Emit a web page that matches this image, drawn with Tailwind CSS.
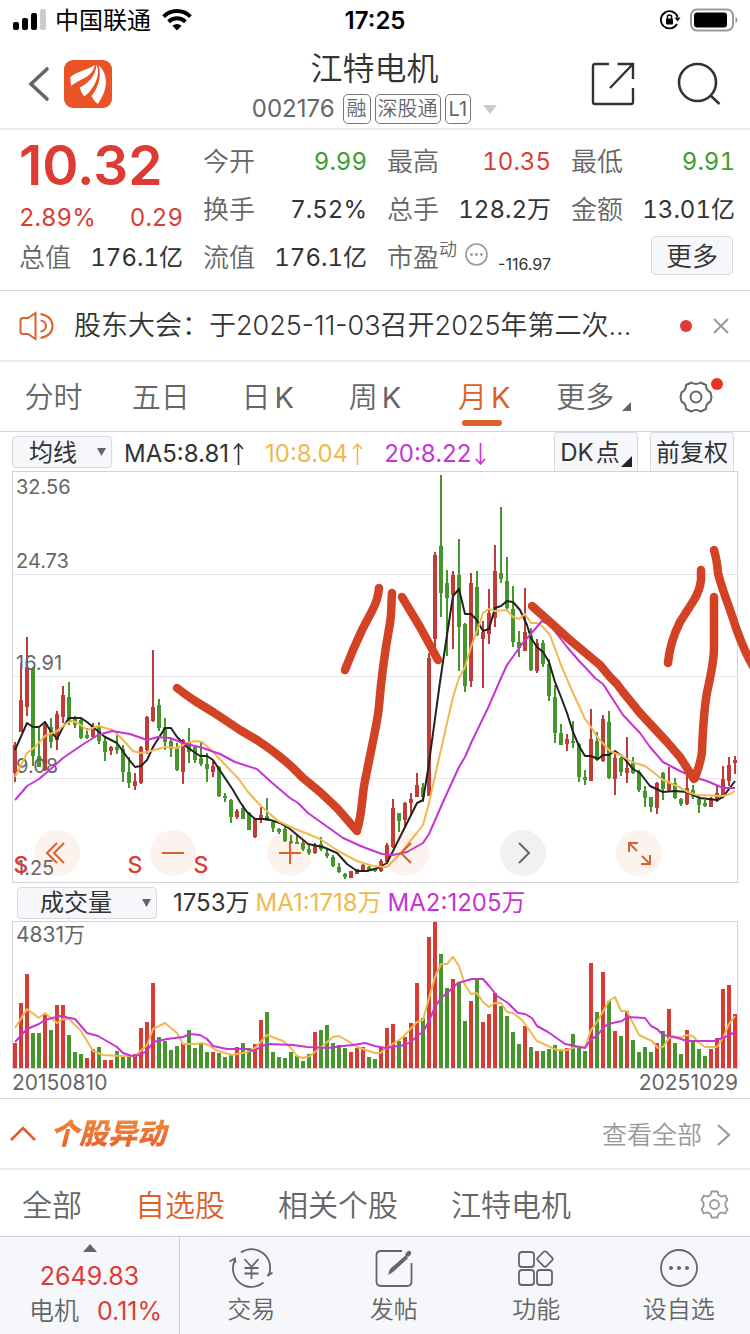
<!DOCTYPE html>
<html lang="zh-CN">
<head>
<meta charset="utf-8">
<meta name="viewport" content="width=device-width, initial-scale=1">
<title>江特电机 002176</title>
<script src="https://cdn.jsdelivr.net/npm/@tailwindcss/browser@4"></script>
</head>
<body class="flex min-h-screen flex-col bg-white font-['Inter','Noto_Sans_CJK_SC',sans-serif] text-[25px] leading-8 text-[#333]">

<!-- status bar -->
<div class="grid h-10 grid-cols-[1fr_auto_1fr] items-center pl-3 pr-3 text-black">
  <div class="flex items-center gap-[9px]">
    <svg class="h-[22px] w-[34px]" viewBox="0 0 34 22"><rect x="1" y="13" width="6" height="8" rx="2"/><rect x="10" y="9" width="6" height="12" rx="2"/><rect x="19" y="4" width="6" height="17" rx="2"/><rect x="28" y="0" width="6" height="21" rx="2" fill="#ccc"/></svg>
    <span class="pt-[2px] text-2xl">中国联通</span>
    <svg class="ml-[2px] h-[22px] w-[30px]" viewBox="0 0 30 22" fill="none" stroke="#000" stroke-width="4"><path d="M1.6 7.6a19 19 0 0 1 26.8 0"/><path d="M6.6 12.8a12 12 0 0 1 16.8 0"/><path d="M15 21.5l-4.6-4.7a6.5 6.5 0 0 1 9.2 0z" fill="#000" stroke="none"/></svg>
  </div>
  <span class="pt-[2px] text-2xl font-semibold">17:25</span>
  <div class="flex items-center justify-end gap-[9px]">
    <svg class="h-[22px] w-[22px]" viewBox="0 0 22 22" fill="none" stroke="#000" stroke-width="1.8"><path d="M18.6 8A8.6 8.6 0 1 0 18 15"/><path d="M15.5 8.5h6l-3 4z" fill="#000" stroke="none"/><rect x="7" y="9.5" width="7" height="6" rx="1" fill="#000" stroke="none"/><path d="M8.4 10V8.2a2.1 2.1 0 0 1 4.2 0V10" stroke-width="1.5"/></svg>
    <svg class="h-[24px] w-[48px]" viewBox="0 0 48 24"><rect x="1" y="1.5" width="42" height="21" rx="6" fill="none" stroke="#999" stroke-width="2"/><rect x="4" y="4.500" width="33" height="15" rx="3"/><path d="M45.500 8.500q2 1.500 2 3.500t-2 3.500z" fill="#999"/></svg>
  </div>
</div>

<!-- header -->
<header class="grid h-[90px] grid-cols-[1fr_auto_1fr] items-center border-b-2 border-[#ebebeb] pl-[28px] pr-[29px]">
  <div class="flex items-center gap-[14px]">
    <button aria-label="返回"><svg class="h-[36px] w-[22px]" viewBox="0 0 22 36" fill="none" stroke="#666" stroke-width="3.600" stroke-linecap="round"><path d="M19 3L3 18l16 15"/></svg></button>
    <a href="#" aria-label="东方财富"><svg class="size-12" viewBox="0 0 48 48"><rect width="48" height="48" rx="9" fill="#ea5326"/><path fill="#fff" d="M6.300 17C13 11.500 22 10.500 31 5c-2 7-6 11-11.500 13.500C15.500 20.500 11 22.500 7 26z"/><path fill="#fff" d="M15.700 27.500C23 24 31.500 17 32.500 5c5 9-3 25.500-12.500 31.500q-3-4-4.300-9z"/><path fill="#fff" d="M27.500 36C33 29 38.500 18 34.500 5c11 10 9 26-.8 39q-3.700-3-6.200-8z"/></svg></a>
  </div>
  <div class="flex flex-col items-center pt-[6px]">
    <h1 class="text-[32px] leading-10 font-[350]">江特电机</h1>
    <div class="mt-1 flex items-center gap-1 text-[#666]">
      <span class="mr-1 text-2xl leading-8">002176</span>
      <span class="rounded-[5px] border border-[#777] px-[3px] text-xl leading-7 font-[350]">融</span>
      <span class="rounded-[5px] border border-[#777] px-[2px] text-xl leading-7 font-[350]">深股通</span>
      <span class="rounded-[5px] border border-[#777] px-[3px] text-xl leading-7">L1</span>
      <svg class="ml-2 h-[9px] w-[14px]" viewBox="0 0 14 9"><path d="M0 0h14L7 9z" fill="#ccc"/></svg>
    </div>
  </div>
  <div class="flex items-center justify-end gap-[42px]">
    <button aria-label="分享"><svg class="size-[44px]" viewBox="0 0 44 44" fill="none" stroke="#333" stroke-width="2.400"><path d="M18 2H4q-2 0-2 2v36q0 2 2 2h36q2 0 2-2V26M26.500 2H42v15M41 3L19 26"/></svg></button>
    <button aria-label="搜索"><svg class="size-[44px]" viewBox="0 0 44 44" fill="none" stroke="#333" stroke-width="2.600"><circle cx="20.500" cy="20.500" r="18.500"/><path d="M33.500 33.500l9 8.500"/></svg></button>
  </div>
</header>

<!-- quote -->
<section class="grid h-[161px] grid-cols-4 gap-x-5 border-b border-[#d5d5da] pl-[19px] pr-[15px] pt-2 text-2xl tabular-nums">
  <div class="text-[#dd3b34]">
    <div class="h-[55px] text-[55px] leading-[54px] font-semibold proportional-nums">10.32</div>
    <div class="flex h-[41px] items-end justify-between"><span>2.89%</span><span>0.29</span></div>
    <div class="flex h-12 items-center justify-between text-[#333]"><span class="text-[26px] font-[350] text-[#666]">总值</span><span>176.1亿</span></div>
  </div>
  <div>
    <div class="flex h-12 items-center justify-between"><span class="text-[26px] font-[350] text-[#666]">今开</span><span class="text-[#429e2c]">9.99</span></div>
    <div class="flex h-12 items-center justify-between"><span class="text-[26px] font-[350] text-[#666]">换手</span><span>7.52%</span></div>
    <div class="flex h-12 items-center justify-between"><span class="text-[26px] font-[350] text-[#666]">流值</span><span>176.1亿</span></div>
  </div>
  <div>
    <div class="flex h-12 items-center justify-between"><span class="text-[26px] font-[350] text-[#666]">最高</span><span class="text-[#dd3b34]">10.35</span></div>
    <div class="flex h-12 items-center justify-between"><span class="text-[26px] font-[350] text-[#666]">总手</span><span>128.2万</span></div>
    <div class="flex h-12 items-center whitespace-nowrap text-[#666]"><span class="text-[26px] font-[350]">市盈</span><span class="mb-4 text-lg leading-6 font-[350]">动</span>
      <svg class="mb-2 ml-2 size-[23px] shrink-0" viewBox="0 0 23 23" fill="#999"><circle cx="11.500" cy="11.500" r="10.500" fill="none" stroke="#999" stroke-width="1.600"/><circle cx="6.500" cy="11.500" r="1.400"/><circle cx="11.500" cy="11.500" r="1.400"/><circle cx="16.500" cy="11.500" r="1.400"/></svg>
      <span class="ml-auto mt-3 text-base text-[#333] proportional-nums">-116.97</span></div>
  </div>
  <div>
    <div class="flex h-12 items-center justify-between"><span class="text-[26px] font-[350] text-[#666]">最低</span><span class="text-[#429e2c]">9.91</span></div>
    <div class="flex h-12 items-center justify-between"><span class="text-[26px] font-[350] text-[#666]">金额</span><span>13.01亿</span></div>
    <div class="flex h-12 items-start justify-end pr-[2px] pt-[2px]"><button class="h-[39px] w-[82px] rounded-[5px] border border-[#d8dae2] bg-[#f6f7fa] pt-[2px] text-[26px] leading-8 font-[350]">更多</button></div>
  </div>
</section>

<!-- notice -->
<section class="flex h-[71px] items-center border-b-2 border-[#ebebeb] pl-[19px] pr-[21px]">
  <svg class="h-[30px] w-[35px] shrink-0" viewBox="0 0 35 30" fill="none" stroke="#dc602a" stroke-width="2"><path d="M16.500 2v26L9 23H4q-2.500 0-2.500-2.500v-11Q1.500 7 4 7h5z"/><path d="M21.500 9.500a5.500 5.500 0 0 1 0 11M21.500 3q12 2.500 12 12t-12 12"/></svg>
  <a href="#" class="ml-5 min-w-0 flex-1 truncate text-[27px] font-[350]">股东大会：于2025-11-03召开2025年第二次...</a>
  <span class="ml-4 size-3 rounded-full bg-[#dd3b34]"></span>
  <button aria-label="关闭" class="ml-[21px]"><svg class="size-4" viewBox="0 0 16 16" stroke="#999" stroke-width="2"><path d="M1 1l14 14M15 1L1 15"/></svg></button>
</section>

<!-- period tabs -->
<nav class="grid h-[70px] grid-cols-7 border-b border-[#d5d5da] text-[29px] font-[350] text-[#666]">
  <button class="pt-[2px]">分时</button>
  <button class="pt-[2px]">五日</button>
  <button class="pt-[2px]">日<span class="ml-1 font-normal">K</span></button>
  <button class="pt-[2px]">周<span class="ml-1 font-normal">K</span></button>
  <button class="relative pl-1 pt-[2px] text-[#dc602a]">月<span class="ml-1 font-normal">K</span><span class="absolute bottom-[5px] left-1/2 h-[6px] w-10 -translate-x-1/2 rounded-full bg-[#dc602a]"></span></button>
  <button class="relative pr-2 pt-[2px]">更多<svg class="absolute bottom-5 right-3 size-[9px]" viewBox="0 0 9 9"><path d="M9 0v9H0z" fill="#666"/></svg></button>
  <button aria-label="设置" class="relative flex items-center justify-center"><svg class="size-[34px]" viewBox="0 0 34 34" fill="none" stroke="#666" stroke-width="2"><path d="M12.500 2.500q4.500 3 9 0l5.500 2.500q-.300 5 4.500 7.500l1 4.500-1 4.500q-4.800 2.500-4.500 7.500l-5.500 2.500q-4.500-3-9 0L7 29q.300-5-4.500-7.500l-1-4.500 1-4.500Q7.300 10 7 5z" stroke-linejoin="round"/><circle cx="17" cy="17" r="5.500"/></svg><span class="absolute right-[27px] top-4 size-3 rounded-full bg-[#e93323]"></span></button>
</nav>

<!-- moving averages -->
<div class="flex h-[39px] items-center pl-3 pr-4">
  <div class="relative w-[100px]">
    <select aria-label="主图指标" class="block h-8 w-full appearance-none rounded-[4px] border border-[#d8dae2] bg-[#f6f7fa] pl-4 pt-[2px] text-2xl leading-7"><option>均线</option></select>
    <svg class="pointer-events-none absolute right-[6px] top-3 h-2 w-[9px]" viewBox="0 0 9 8"><path d="M0 0h9L4.500 8z" fill="#666"/></svg>
  </div>
  <span class="ml-3 mt-1 flex items-center gap-1 text-2xl">MA5:8.81<svg class="h-[22px] w-[11px]" viewBox="0 0 11 22" fill="none" stroke="currentColor" stroke-width="1.600"><path d="M5.500 22V1M1 6l4.500-5L10 6"/></svg></span>
  <span class="ml-[21px] mt-1 flex items-center gap-1 text-2xl text-[#f0b950]">10:8.04<svg class="h-[22px] w-[11px]" viewBox="0 0 11 22" fill="none" stroke="currentColor" stroke-width="1.600"><path d="M5.500 22V1M1 6l4.500-5L10 6"/></svg></span>
  <span class="ml-[21px] mt-1 flex items-center gap-1 text-2xl text-[#c734d3]">20:8.22<svg class="h-[22px] w-[11px]" viewBox="0 0 11 22" fill="none" stroke="currentColor" stroke-width="1.600"><path d="M5.500 0v21M1 16l4.500 5 4.500-5"/></svg></span>
  <button class="relative ml-auto h-[39px] w-[84px] rounded-t-[4px] border border-b-0 border-[#d8dae2] bg-[#f6f7fa] pr-[12px] pt-[2px] text-2xl">DK<span class="ml-[2px]">点</span><svg class="absolute bottom-1 right-[5px] size-[11px]" viewBox="0 0 11 11"><path d="M11 0v11H0z" fill="#222"/></svg></button>
  <button class="ml-3 h-[39px] w-[84px] rounded-t-[4px] border border-b-0 border-[#d8dae2] bg-[#f6f7fa] pt-[2px] text-2xl">前复权</button>
</div>

<!-- monthly candles -->
<div class="relative">
  <svg class="relative block h-auto w-full overflow-visible" viewBox="0 471 750 412" role="img" aria-label="月K线图">
    <path d="M12 574.500h726M12 676.500h726M12 778.500h726" stroke="#e6e6ec"/>
    <rect x="12.500" y="471.500" width="725" height="411" fill="none" stroke="#d2d2d7"/>
    <g stroke="#bf3c37" fill="none"><path id="wick-up" stroke-width="2"/><path id="body-up" stroke-width="4"/></g>
    <g stroke="#45972d" fill="none"><path id="wick-down" stroke-width="2"/><path id="body-down" stroke-width="4"/></g>
    <g fill="#666" font-size="20"><text x="16" y="494">32.56</text><text x="16" y="568">24.73</text><text x="16" y="670">16.91</text><text x="16" y="773">9.08</text><text x="16" y="875">1.25</text></g>
    <g fill="none" stroke-width="2" stroke-linejoin="round">
      <polyline stroke="#222" points="15,750 27,723 33,727 39,727 45,722 50,730 57,739 63,727 69,718 81,718 87,722 93,727 105,737 117,743 127,757 135,767 141,766 147,760 153,747 165,728 171,728 177,737 187,747 200,756 207,756 213,760 233,790 240,802 247,812 255,819 267,819 280,823 290,829 308,844 323,847 337,853 347,864 357,871 367,871 378,868 387,863 393,851 403,831 417,803 423,800 428,770 440,682 447,635 453,596 459,589 465,614 471,614 476,619 483,631 489,629 495,608 501,606 507,601 513,602 520,610 527,625 531,638 537,647 543,652 549,662 555,682 561,697 567,713 573,732 579,746 585,756 591,756 598,759 603,755 609,755 615,751 623,757 633,769 640,773 650,786 663,792 675,791 687,792 700,798 717,800 723,797 735,781"/>
      <polyline stroke="#f0b950" points="15,777 27,753 35,747 45,736 57,731 67,723 72,721 78,723 87,730 98,726 113,730 123,740 133,751 140,753 147,752 165,747 177,748 187,743 195,741 202,742 213,752 230,770 238,778 248,792 260,805 278,821 293,828 308,834 320,839 340,852 357,861 373,866 387,867 400,854 423,825 429,803 437,767 453,697 459,678 465,667 471,647 477,631 483,613 489,609 495,611 507,610 513,617 519,619 525,614 531,623 537,623 543,627 550,635 561,665 567,679 573,693 585,719 591,727 598,738 610,751 620,755 632,762 645,766 653,772 663,780 677,786 688,792 697,795 723,796 730,794 735,791"/>
      <polyline stroke="#c734d3" points="15,800 22,792 27,786 39,779 53,767 63,758 82,745 98,735 112,731 130,734 147,740 158,737 170,738 183,743 203,748 220,754 235,762 257,769 270,781 290,798 298,803 308,813 343,838 363,847 382,854 393,855 407,852 423,843 429,834 443,802 459,767 465,757 472,741 488,708 501,678 507,665 522,644 542,621 550,625 567,647 580,662 585,667 595,678 603,684 623,715 640,733 650,747 663,762 680,771 693,777 707,781 723,788 735,788"/>
    </g>
    <g fill="#dd3b34" font-size="23" font-weight="500" text-anchor="middle"><text x="21" y="873">S</text><text x="135" y="873">S</text><text x="201" y="873">S</text></g>
  </svg>
  <div class="absolute bottom-[7px] left-[34px] right-[88px] flex justify-between">
    <button aria-label="最早" class="size-[46px] rounded-full bg-[#dc602a]/8"><svg class="size-[46px]" viewBox="0 0 46 46" fill="none" stroke="#dc602a" stroke-width="2"><path d="M23 13L13 23l10 10M30 13L20 23l10 10"/></svg></button>
    <button aria-label="缩小" class="size-[46px] rounded-full bg-[#dc602a]/8"><svg class="size-[46px]" viewBox="0 0 46 46" fill="none" stroke="#dc602a" stroke-width="2"><path d="M12 23h22"/></svg></button>
    <button aria-label="放大" class="size-[46px] rounded-full bg-[#dc602a]/8"><svg class="size-[46px]" viewBox="0 0 46 46" fill="none" stroke="#dc602a" stroke-width="2"><path d="M12 23h22M23 12v22"/></svg></button>
    <button aria-label="向左" class="size-[46px] rounded-full bg-[#dc602a]/8"><svg class="size-[46px]" viewBox="0 0 46 46" fill="none" stroke="#dc602a" stroke-width="2"><path d="M28 13L18 23l10 10"/></svg></button>
    <button aria-label="向右" class="size-[46px] rounded-full bg-[#f1f1f1]"><svg class="size-[46px]" viewBox="0 0 46 46" fill="none" stroke="#666" stroke-width="2"><path d="M19 13l10 10-10 10"/></svg></button>
    <button aria-label="全屏" class="size-[46px] rounded-full bg-[#dc602a]/8"><svg class="size-[46px]" viewBox="0 0 46 46" fill="none" stroke="#dc602a" stroke-width="2"><path d="M13 22v-9h9M13 13l8 8M34 25v9h-9M34 34l-8-8"/></svg></button>
  </div>
  <!-- hand-drawn trend arrows -->
  <svg class="pointer-events-none absolute inset-0 w-full" viewBox="0 471 750 412" fill="none" stroke="#d24326" stroke-width="8.500" stroke-linecap="round" stroke-linejoin="round">
    <path d="M177 688Q186 695 195 701L213 712 240 730 257 740Q277 753 293 768L303 778 320 792 337 808 357 831"/>
    <path d="M357 830C363 812 361 797 366 776C372 745 378 720 379 706C382 670 387 640 389 629C392 615 391 605 392 593"/>
    <path d="M379 588Q378 600 372 611L362 630 353 650 345 670M402 597L420 627 438 660"/>
    <path d="M532 606L550 622 570 640 600 665 610 677Q617 683 623 692L640 713 667 742 680 757 694 779"/>
    <path d="M695 778C700 764 702 757 702 750C703 727 705 700 708 688C712 668 714 662 714 647V597"/>
    <path d="M701 570V580Q700 590 694 600L680 622Q670 642 668 663M714 550Q717 560 718 573C722 590 730 608 736 628Q745 653 754 668"/>
  </svg>
</div>

<!-- volume -->
<div class="flex h-[38px] items-center pl-[17px] pt-[2px] text-2xl">
  <div class="relative w-[140px]">
    <select aria-label="副图指标" class="block h-8 w-full appearance-none rounded-[4px] border border-[#d8dae2] bg-[#f6f7fa] pl-[22px] text-2xl leading-7"><option>成交量</option></select>
    <svg class="pointer-events-none absolute right-[6px] top-3 h-2 w-[9px]" viewBox="0 0 9 8"><path d="M0 0h9L4.500 8z" fill="#666"/></svg>
  </div>
  <span class="ml-4">1753万</span>
  <span class="ml-[6px] text-[#f0b950]">MA1:1718万</span>
  <span class="ml-[6px] text-[#c734d3]">MA2:1205万</span>
</div>
<svg class="block h-auto w-full" viewBox="0 921 750 148" role="img" aria-label="成交量图">
  <rect x="12.500" y="921.500" width="725" height="147" fill="none" stroke="#d2d2d7"/>
  <text x="16" y="942" fill="#666" font-size="21">4831万</text>
  <path id="vol-up" stroke="#d93b32" stroke-width="4"/>
  <path id="vol-down" stroke="#45972d" stroke-width="4"/>
  <g fill="none" stroke-width="2" stroke-linejoin="round">
    <polyline stroke="#f0b950" points="15,1028 27,1009 39,1018 45,1013 57,1023 63,1019 69,1019 81,1031 93,1051 103,1055 120,1056 135,1056 147,1045 153,1029 165,1023 177,1033 183,1044 195,1044 202,1043 208,1045 218,1051 232,1055 247,1052 255,1048 267,1035 283,1041 290,1047 297,1056 303,1058 310,1056 320,1048 333,1037 339,1036 348,1041 357,1047 375,1053 380,1053 388,1047 402,1038 417,1022 423,1020 429,998 435,977 441,964 447,964 453,957 459,966 465,985 471,994 477,993 483,1002 489,1007 495,1003 501,1003 507,1012 513,1013 522,1020 537,1041 548,1046 557,1050 567,1050 575,1047 585,1047 591,1030 597,1022 609,1001 615,997 621,1011 627,1011 639,1035 652,1041 658,1048 663,1047 669,1038 682,1037 687,1035 693,1036 698,1042 705,1047 717,1047 723,1038 729,1024 735,1016"/>
    <polyline stroke="#c734d3" points="15,1042 27,1029 39,1024 45,1020 60,1016 75,1019 87,1033 98,1036 117,1047 123,1053 132,1056 140,1055 147,1051 153,1042 167,1039 183,1037 190,1034 200,1035 207,1039 213,1046 227,1049 247,1049 253,1051 267,1044 293,1045 307,1047 328,1048 343,1046 353,1045 365,1043 375,1046 385,1048 405,1045 412,1041 418,1035 423,1032 429,1021 435,1007 441,998 447,993 458,983 472,979 483,979 490,987 497,996 508,1003 518,1013 525,1014 532,1018 537,1026 548,1032 565,1044 575,1046 585,1048 591,1039 597,1036 603,1028 608,1024 622,1021 627,1017 645,1018 651,1026 657,1029 663,1035 675,1037 687,1041 715,1041 725,1037 735,1032"/>
  </g>
</svg>
<div class="flex h-[30px] justify-between border-b border-[#d5d5da] px-3 text-[21px] leading-7 text-[#666]"><span>20150810</span><span>20251029</span></div>

<!-- stock alerts -->
<section class="flex h-[71px] items-center border-b-2 border-[#ebebeb] pl-[10px] pr-[19px]">
  <svg class="h-[15px] w-[26px]" viewBox="0 0 26 15" fill="none" stroke="#dc602a" stroke-width="2.600"><path d="M1 14L13 2l12 12"/></svg>
  <h2 class="ml-[14px] bg-linear-to-b from-[#ee8a3c] to-[#ea5a2a] bg-clip-text pr-1 text-[29px] font-black italic text-transparent">个股异动</h2>
  <a href="#" class="ml-auto flex items-center gap-[15px] pt-[2px] text-[25px] font-[350] text-[#999]">查看全部<svg class="h-6 w-[14px]" viewBox="0 0 14 24" fill="none" stroke="#999" stroke-width="2.200"><path d="M1 2l11 10L1 22"/></svg></a>
</section>
<nav class="flex h-[67px] items-center gap-[53px] border-b border-[#d0d0d6] pl-[22px] pr-[21px] pt-[3px] text-[30px] font-[350] text-[#666]">
  <button>全部</button><button class="text-[#dc602a]">自选股</button><button>相关个股</button><button>江特电机</button>
  <button aria-label="筛选设置" class="ml-auto"><svg class="size-[29px]" viewBox="0 0 29 29" fill="none" stroke="#999" stroke-width="1.800" stroke-linejoin="round"><path d="M11.500 1.500h6l1 3.500 3 1.700 3.700-1.200 2.300 4.500-2 2.500v4l2 2.500-2.300 4.500-3.700-1.200-3 1.700-1 3.500h-6l-1-3.500-3-1.700-3.700 1.200L1.500 19l2-2.500v-4l-2-2.500 2.300-4.500 3.700 1.200 3-1.700z"/><circle cx="14.500" cy="14.500" r="4.500"/></svg></button>
</nav>

<!-- bottom bar -->
<footer class="flex grow bg-[#f6f7fa] text-2xl text-[#666]">
  <a href="#" class="flex w-[180px] flex-col items-center border-r border-[#d0d0d6] pt-[7px] text-[25px] text-[#dd3b34]">
    <svg class="h-2 w-[14px]" viewBox="0 0 14 8"><path d="M0 8h14L7 0z" fill="#666"/></svg>
    <span class="mt-2 leading-8">2649.83</span>
    <span class="mt-[3px] flex gap-[18px] pl-3 leading-8"><span class="font-[350] text-[#666]">电机</span>0.11%</span>
  </a>
  <nav class="grid grow grid-cols-4 font-[350]">
    <a href="#" class="flex flex-col items-center pt-[9px]"><svg class="h-11 w-[46px]" viewBox="0 0 46 44" fill="none" stroke="#666" stroke-width="1.800"><path d="M13 6.500A18.500 18.500 0 0 1 41 28M41 28l-1.500 2 5-3.500M35.500 36.500A18.500 18.500 0 0 1 7 14M1.500 15.500L7 12.500l.5 4"/><path d="M16.500 13l7 8 7-8M16.500 22h14M16.500 27.500h14M23.500 21v12"/></svg><span class="mt-1 leading-8">交易</span></a>
    <a href="#" class="flex flex-col items-center pt-[9px]"><svg class="h-11 w-[46px]" viewBox="0 0 46 44" fill="none" stroke="#666" stroke-width="1.800"><path d="M31 5H10q-4.500 0-4.500 4.500v26Q5.500 40 10 40h26q4.500 0 4.500-4.500V17"/><path d="M17 29l2-6L34.500 9.500l2.500 2.700L22 26z" fill="#666" stroke="none"/><path d="M36.500 8.700l1.500-1.500" stroke-width="4.500" stroke-linecap="round"/></svg><span class="mt-1 leading-8">发帖</span></a>
    <a href="#" class="flex flex-col items-center pt-[9px]"><svg class="h-11 w-[46px]" viewBox="0 0 46 44" fill="none" stroke="#666" stroke-width="1.800"><rect x="6" y="6" width="15" height="15" rx="3"/><rect x="6" y="24" width="15" height="15" rx="3"/><rect x="24" y="24" width="15" height="15" rx="3"/><rect x="26" y="7" width="12" height="12" rx="2" transform="rotate(45 32 13)"/></svg><span class="mt-1 leading-8">功能</span></a>
    <a href="#" class="flex flex-col items-center pt-[9px]"><svg class="h-11 w-[46px]" viewBox="0 0 46 44" fill="#666"><circle cx="23" cy="22" r="18" fill="none" stroke="#666" stroke-width="1.800"/><circle cx="15" cy="22" r="2"/><circle cx="23" cy="22" r="2"/><circle cx="31" cy="22" r="2"/></svg><span class="mt-1 leading-8">设自选</span></a>
  </nav>
</footer>

<script>
// One entry per month: direction (r = up, g = down), high, low, body top, body bottom
const candles = `r 742 782 745 773,r 663 732 700 732,r 637 716 667 707,g 667 766 668 756,g 728 767 756 767,r 721 771 725 770,g 718 748 727 742,r 711 750 714 740,r 686 723 695 717,g 682 725 697 722,
g 716 728 718 725,g 718 739 720 738,g 728 739 735 738,r 723 738 726 737,g 722 744 726 741,g 737 761 741 752,r 746 755 747 751,g 735 754 747 750,g 745 782 749 772,g 757 788 772 783,
r 773 790 781 786,r 746 784 747 783,r 716 754 717 750,r 650 722 707 721,g 699 731 705 728,g 718 750 727 742,g 739 757 741 749,g 743 771 747 770,r 739 784 740 772,g 728 763 743 752,
g 745 763 747 760,g 741 766 758 764,g 753 782 764 769,r 761 777 766 772,g 766 797 767 796,g 793 802 796 798,g 799 823 800 817,r 809 819 811 817,g 805 819 808 819,g 812 830 813 830,
r 818 838 819 837,r 807 823 815 820,g 798 821 816 821,g 821 832 822 828,g 828 834 829 832,g 827 842 829 841,g 835 844 841 843,g 835 844 842 844,g 840 851 843 849,g 845 855 849 853,
r 843 854 846 853,g 837 851 844 849,g 848 858 853 856,g 855 867 857 866,g 863 873 867 872,g 873 879 874 877,r 871 878 871 878,r 869 874 869 874,r 864 872 865 871,g 866 871 867 870,
g 868 872 869 871,r 859 872 861 871,r 843 863 845 862,r 799 848 808 847,g 813 832 813 821,r 802 828 803 820,r 793 814 799 803,r 773 797 785 797,g 783 802 787 797,r 653 796 658 796,
r 552 652 555 639,g 475 617 546 593,g 570 656 583 598,r 571 649 575 595,g 539 671 575 627,g 623 692 624 686,r 573 687 583 681,g 571 636 587 635,r 621 688 632 639,r 589 644 613 634,
r 545 627 571 618,g 507 583 573 579,g 557 610 581 608,g 586 647 609 642,g 631 657 642 648,r 588 651 632 651,g 628 671 635 670,r 639 673 643 671,g 640 667 643 664,g 659 701 664 696,
g 685 743 697 733,g 724 745 733 745,r 734 751 739 744,g 721 748 741 743,g 743 782 744 777,g 770 785 777 780,r 709 781 739 781,g 732 761 741 760,r 715 762 719 761,g 711 779 722 778,
r 754 795 758 779,g 757 776 758 772,r 737 783 768 773,g 757 774 762 773,g 770 792 772 790,g 786 807 791 798,g 797 812 797 807,r 782 814 783 808,g 772 800 773 789,r 767 792 782 790,
g 778 799 783 798,g 798 806 799 804,r 770 805 788 804,g 785 799 790 797,g 797 813 799 805,g 800 807 803 806,r 797 807 798 807,r 786 802 793 801,r 766 798 779 795,r 757 786 765 781,r 756 774 760 763`
  .split(',').map(s => s.trim().split(' '));
// Bar height per month
const volumes = `r25 r65 r94 g35 g35 r53 g38 r63 r63 g33 g16 g14 r10 r19 g21 r8 r8 g17 g12 g12 r14 r40 r46 r85 g31 g27 g18 g22 r25 g38 g20 g24 g16 r16 g15 g11 g13 r21 g25 g20 r24 r48 g56 g16 g11 g10 g16 g12 g7 g14 r36 g38 g43 g25 g23 g20 r16 r20 r21 g11 g9
r21 r40 r44 g27 r31 r45 r85 g50 r131 r146 g114 g80 r89 g86 g47 r67 g90 r46 r54 r75 g62 g52 g36 g24 r42 g21 r17 g17 g19 g23 g18 r20 g34 g21 g17 r105 g56 r96 g67 r37 g32 r57 g28 g16 g21 g16 r25 g37 r59 g25 g14 r38 g28 g19 g12 r19 r30 r79 r83 r54`.split(/\s+/);
const x = i => 15 + 6 * i;
const draw = (id, segs) => document.getElementById(id).setAttribute('d', segs.join(''));
for (const [dir, name] of [['r', 'up'], ['g', 'down']]) {
  const wick = [], body = [], vol = [];
  candles.forEach(([c, hi, lo, top, bottom], i) => {
    if (c !== dir) return;
    wick.push(`M${x(i)} ${hi}V${lo}`);
    body.push(`M${x(i)} ${top}V${bottom}`);
  });
  volumes.forEach((v, i) => { if (v[0] === dir) vol.push(`M${x(i)} 1068v-${v.slice(1)}`); });
  draw('wick-' + name, wick);
  draw('body-' + name, body);
  draw('vol-' + name, vol);
}
</script>
</body>
</html>
